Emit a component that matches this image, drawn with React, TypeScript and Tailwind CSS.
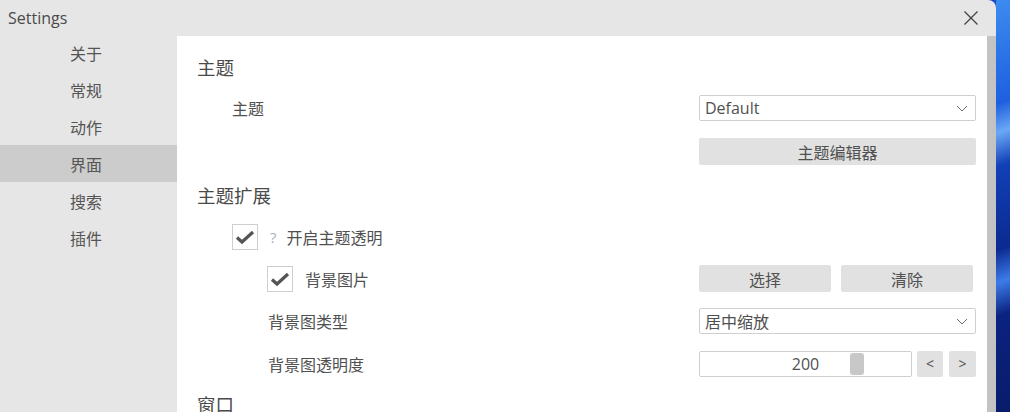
const cjk = "font-['Noto_Sans_CJK_SC','Noto_Sans',sans-serif]";

const navItems = ["关于", "常规", "动作", "界面", "搜索", "插件"];

const Chevron = () => (
  <svg width="12" height="7" viewBox="0 0 12 7" className="mr-[7px]">
    <polyline points="1,1 6,6 11,1" fill="none" stroke="#6b6b6b" strokeWidth="1" />
  </svg>
);

const Select = ({ value }: { value: string }) => (
  <div className="flex h-[26px] w-[277px] items-center justify-between rounded-[2px] border border-[#cfcfcf] bg-white pl-[5px]">
    <span className="text-[16px] leading-none text-[#505050]">{value}</span>
    <Chevron />
  </div>
);

const Button = ({ label, className }: { label: string; className: string }) => (
  <div
    className={`flex items-center justify-center rounded-[2px] bg-[#e1e1e1] text-[16px] leading-none text-[#505050] ${className}`}
  >
    {label}
  </div>
);

const Checkbox = () => (
  <div className="flex h-[26px] w-[26px] items-center justify-center border border-[#cfcfcf] bg-white">
    <svg width="20" height="16" viewBox="0 0 20 16">
      <polyline
        points="2,8.5 7,13 18,3"
        fill="none"
        stroke="#555"
        strokeWidth="3.2"
        strokeLinejoin="miter"
      />
    </svg>
  </div>
);

const Heading = ({ children, className = "" }: { children: string; className?: string }) => (
  <div className={`flex h-[26px] items-center pl-[20px] text-[18.5px] text-[#4a4a4a] ${className}`}>
    {children}
  </div>
);

export default function App() {
  return (
    <div className={`flex h-[412px] w-[1010px] overflow-hidden bg-[#1b4bc4] ${cjk}`}>
      {/* window */}
      <div className="flex h-full w-[996px] flex-col overflow-hidden rounded-tr-[8px] bg-[#e6e6e6]">
        {/* title bar */}
        <div className="flex h-[36px] shrink-0 items-center justify-between pl-[8px] pr-[17px]">
          <span className="font-['Open_Sans',sans-serif] text-[16px] text-[#4a4a4a]">Settings</span>
          <svg width="16" height="16" viewBox="0 0 16 16">
            <path d="M1.5 1.5 L14.5 14.5 M14.5 1.5 L1.5 14.5" stroke="#444" strokeWidth="1.3" />
          </svg>
        </div>

        <div className="flex min-h-0 flex-1">
          {/* sidebar */}
          <div className="-mt-[2px] flex w-[177px] shrink-0 flex-col">
            {navItems.map((item) => (
              <div
                key={item}
                className={`flex h-[37px] items-center pl-[70px] text-[16px] text-[#555] ${
                  item === "界面" ? "bg-[#cccccc]" : ""
                }`}
              >
                {item}
              </div>
            ))}
          </div>

          {/* content */}
          <div className="flex min-w-0 flex-1 flex-col bg-white pr-[11px] pt-[19px]">
            <Heading>主题</Heading>

            <div className="mt-[14px] flex h-[26px] items-center justify-between pl-[55px]">
              <span className="text-[16px] text-[#505050]">主题</span>
              <div className="font-['Open_Sans',sans-serif]">
                <Select value="Default" />
              </div>
            </div>

            <div className="mt-[17px] flex justify-end">
              <Button label="主题编辑器" className="h-[27px] w-[277px]" />
            </div>

            <Heading className="mt-[18px]">主题扩展</Heading>

            <div className="mt-[15px] flex h-[26px] items-center pl-[55px]">
              <Checkbox />
              <span className="ml-[12px] font-['Open_Sans',sans-serif] text-[15px] text-[#b0b0b0]">?</span>
              <span className="ml-[10px] text-[16px] text-[#505050]">开启主题透明</span>
            </div>

            <div className="mt-[15px] flex h-[27px] items-center justify-between pl-[90px]">
              <div className="flex items-center">
                <Checkbox />
                <span className="ml-[12px] text-[16px] text-[#505050]">背景图片</span>
              </div>
              <div className="mr-[3px] flex gap-[10px]">
                <Button label="选择" className="h-[27px] w-[132px]" />
                <Button label="清除" className="h-[27px] w-[132px]" />
              </div>
            </div>

            <div className="mt-[16px] flex h-[26px] items-center justify-between pl-[91px]">
              <span className="text-[16px] text-[#505050]">背景图类型</span>
              <Select value="居中缩放" />
            </div>

            <div className="mt-[17px] flex h-[26px] items-center justify-between pl-[91px]">
              <span className="text-[16px] text-[#505050]">背景图透明度</span>
              <div className="flex items-center gap-[5px]">
                <div className="relative flex h-[26px] w-[213px] items-center justify-center rounded-[2px] border border-[#cfcfcf] bg-white">
                  <span className="font-['Open_Sans',sans-serif] text-[16px] leading-none text-[#505050]">200</span>
                  <div className="absolute left-[150px] top-[1px] h-[22px] w-[14px] rounded-[3px] bg-[#c8c8c8]" />
                </div>
                <Button label="<" className="h-[26px] w-[26px] font-['Open_Sans',sans-serif] !text-[14px]" />
                <Button label=">" className="ml-[1px] h-[26px] w-[27px] font-['Open_Sans',sans-serif] !text-[14px]" />
              </div>
            </div>

            <Heading className="mt-[15px]">窗口</Heading>
          </div>

          {/* scrollbar */}
          <div className="w-[9px] shrink-0 bg-[#c3c3c3]" />
        </div>
      </div>

      {/* wallpaper */}
      <div className="h-full flex-1 bg-[linear-gradient(160deg,#3c8cf0_0%,#1e5fe0_25%,#6aa8f5_32%,#1240b8_40%,#0b2a90_60%,#3d7be8_68%,#0a2380_76%,#081c6a_100%)]" />
    </div>
  );
}
